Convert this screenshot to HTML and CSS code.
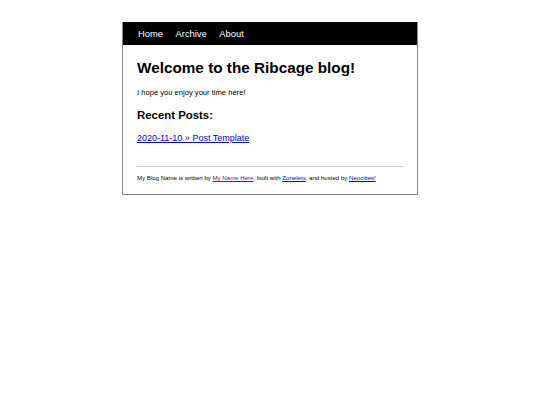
FILE: index.html
```html
<!DOCTYPE html>
<html>
<head>
<meta charset="utf-8">
<title>Ribcage blog</title>
<link rel="stylesheet" href="styles.css">
</head>
<body>
<div class="page">
  <nav class="nav">
    <a href="#">Home</a>
    <a href="#">Archive</a>
    <a href="#">About</a>
  </nav>
  <main class="content">
    <h1 class="title">Welcome to the Ribcage blog!</h1>
    <p class="intro">I hope you enjoy your time here!</p>
    <h2 class="subtitle">Recent Posts:</h2>
    <ul class="posts">
      <li><a href="#">2020-11-10 » Post Template</a></li>
    </ul>
    <footer class="footer">
      <hr class="rule">
      <p class="credit">My Blog Name is written by <a class="visited" href="#">My Name Here</a>, built with <a href="#">Zonelets</a>, and hosted by <a href="#">Neocities!</a></p>
    </footer>
  </main>
</div>
</body>
</html>
```
FILE: styles.css
```css
html, body {
  margin: 0;
  padding: 0;
  background: #fff;
}
body {
  font-family: "Liberation Sans", Arial, sans-serif;
  color: #000;
}
.page {
  width: 294px;
  margin: 22px auto 0;
  border: 1px solid #888;
  border-top: none;
}
.nav {
  background: #000;
  height: 23px;
  display: flex;
  align-items: center;
  gap: 12.5px;
  padding: 0 15px;
}
.nav a {
  color: #fff;
  text-decoration: none;
  font-size: 9.4px;
}
.content {
  padding: 14px 14px 12px;
}
.title {
  font-size: 15.3px;
  font-weight: bold;
  margin: 0 0 11px;
  line-height: 18px;
}
.intro {
  font-size: 7.6px;
  margin: 0 0 10px;
  line-height: 10px;
}
.subtitle {
  font-size: 11.4px;
  margin: 0 0 8px;
  line-height: 14px;
}
.posts {
  list-style: none;
  margin: 0;
  padding: 0;
}
.posts li {
  line-height: 12px;
}
.posts a {
  color: #0000ee;
  font-size: 9px;
}
.footer {
  margin-top: 22px;
}
.rule {
  border: none;
  border-top: 1px solid #ccc;
  margin: 0 0 7px;
}
.credit {
  font-size: 6.1px;
  margin: 0;
  line-height: 8px;
}
.credit a {
  color: #0000ee;
}
.credit a.visited {
  color: #551a8b;
}
```
